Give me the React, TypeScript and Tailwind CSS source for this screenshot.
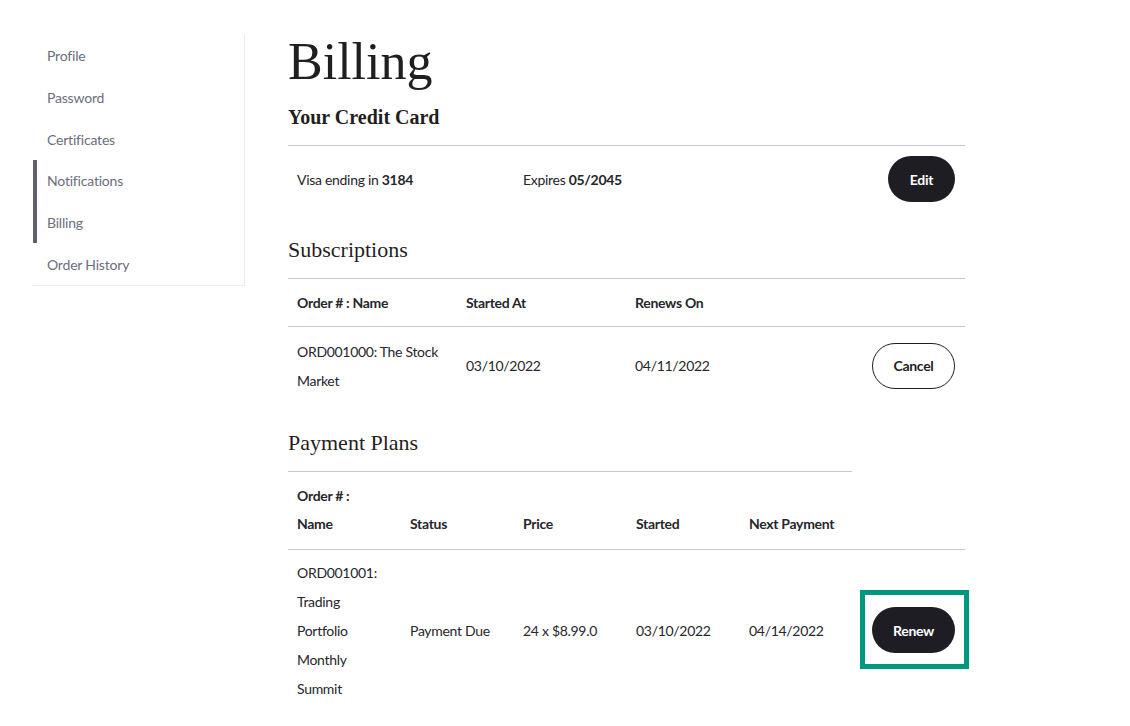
const sans = "font-['Lato','Open_Sans',sans-serif]";
const serif = "font-['Liberation_Serif','Times_New_Roman',serif]";

const navItems = ["Profile", "Password", "Certificates", "Notifications", "Billing", "Order History"];

const Sidebar = () => {
  return (
    <aside className="mt-[35px] w-[212px] shrink-0 self-start border-r border-b border-[#ececf0]">
      {navItems.map((item, i) => (
        <div
          key={item}
          className={`flex h-[41.7px] items-center border-l-4 pl-[10px] text-[14px] tracking-[-0.2px] text-[#6b6e7d] ${
            i === 3 || i === 4 ? "border-[#5e6072]" : "border-transparent"
          }`}
        >
          {item}
        </div>
      ))}
    </aside>
  );
};

const DarkButton = ({ label, width }: { label: string; width: string }) => (
  <button
    className={`${width} h-[46px] rounded-full bg-[#1e1d24] text-[14px] font-bold text-white`}
  >
    {label}
  </button>
);

const App = () => {
  return (
    <div className={`${sans} flex min-h-[726px] gap-[43px] bg-white pl-[33px] text-[#26262c] tracking-[-0.3px]`}>
      <Sidebar />

      <main className="w-[677px] pt-[36px]">
        <h1 className={`${serif} text-[52px] leading-[52px] tracking-normal text-[#1f1f22]`}>Billing</h1>

        {/* Credit card */}
        <h2 className={`${serif} mt-[15px] text-[20px] leading-[28px] font-bold tracking-normal text-[#1f1f22]`}>
          Your Credit Card
        </h2>
        <div className="mt-[14px] border-t border-[#c8c8d1]" />
        <div className="flex items-center pt-[10px] pb-[12px] text-[14px]">
          <div className="w-[226px] pl-[9px]">
            Visa ending in <b>3184</b>
          </div>
          <div className="flex-1 pl-[9px]">
            Expires <b>05/2045</b>
          </div>
          <div className="pr-[10px]">
            <DarkButton label="Edit" width="w-[67px]" />
          </div>
        </div>

        {/* Subscriptions */}
        <h2 className={`${serif} mt-[22px] text-[22px] leading-[28px] tracking-normal text-[#1f1f22]`}>Subscriptions</h2>
        <div className="mt-[14px] border-t border-[#c8c8d1]" />
        <div className="grid h-[48px] grid-cols-[169px_169px_169px_1fr] items-center border-b border-[#c8c8d1] text-[14px] font-bold">
          <div className="pl-[9px]">Order # : Name</div>
          <div className="pl-[9px]">Started At</div>
          <div className="pl-[9px]">Renews On</div>
          <div />
        </div>
        <div className="grid grid-cols-[169px_169px_169px_1fr] items-center py-[9.5px] text-[14px] leading-[29px]">
          <div className="pl-[9px]">ORD001000: The Stock Market</div>
          <div className="pl-[9px]">03/10/2022</div>
          <div className="pl-[9px]">04/11/2022</div>
          <div className="flex justify-end pr-[10px]">
            <button className="h-[46px] w-[83px] rounded-full border border-[#1e1d24] text-[14px] font-bold text-[#1e1d24]">
              Cancel
            </button>
          </div>
        </div>

        {/* Payment plans */}
        <h2 className={`${serif} mt-[25px] text-[22px] leading-[28px] tracking-normal text-[#1f1f22]`}>Payment Plans</h2>
        <div className="mt-[14px] w-[564px] border-t border-[#c8c8d1]" />
        <div className="grid grid-cols-[113px_113px_113px_113px_112px_1fr] items-end border-b border-[#c8c8d1] pt-[10px] pb-[11px] text-[14px] leading-[28px] font-bold">
          <div className="pl-[9px]">
            Order # :
            <br />
            Name
          </div>
          <div className="pl-[9px]">Status</div>
          <div className="pl-[9px]">Price</div>
          <div className="pl-[9px]">Started</div>
          <div className="pl-[9px]">Next Payment</div>
          <div />
        </div>
        <div className="grid grid-cols-[113px_113px_113px_113px_112px_1fr] items-center pt-[7.5px] pb-[8.5px] text-[14px] leading-[29px]">
          <div className="pl-[9px]">
            ORD001001:
            <br />
            Trading
            <br />
            Portfolio
            <br />
            Monthly
            <br />
            Summit
          </div>
          <div className="pl-[9px]">Payment Due</div>
          <div className="pl-[9px]">24 x $8.99.0</div>
          <div className="pl-[9px]">03/10/2022</div>
          <div className="pl-[9px]">04/14/2022</div>
          <div className="flex justify-end pr-[10px]">
            <div className="relative">
              <span className="pointer-events-none absolute -top-[17px] -right-[14px] -bottom-[16px] -left-[12px] border-[5px] border-[#00977f]" />
              <DarkButton label="Renew" width="w-[83px]" />
            </div>
          </div>
        </div>
      </main>
    </div>
  );
};

export default App;
